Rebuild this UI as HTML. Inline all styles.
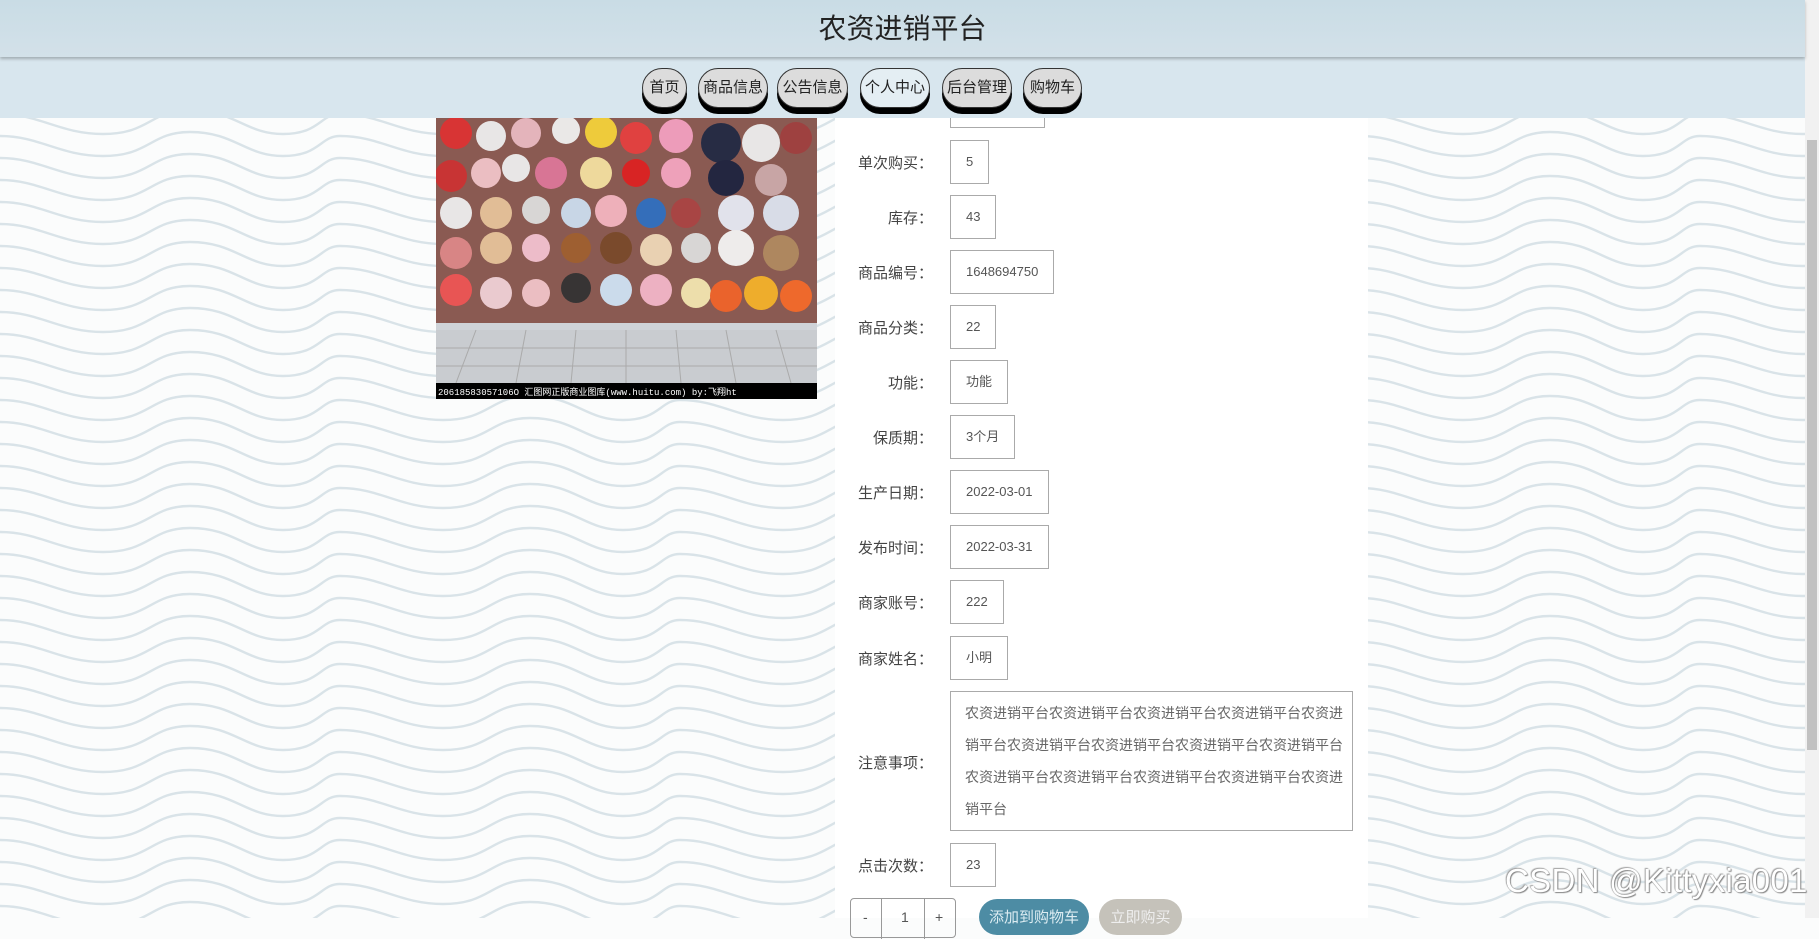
<!DOCTYPE html>
<html><head><meta charset="utf-8">
<style>
*{margin:0;padding:0;box-sizing:border-box}
html,body{width:1819px;height:918px;overflow:hidden;font-family:"Liberation Sans","Noto Sans CJK SC",sans-serif;background:#fbfcfc}
#bg{position:absolute;left:0;top:0;width:1805px;height:918px}
.hdr{position:absolute;left:0;top:0;width:1805px;height:57px;background:linear-gradient(#c9dce5,#d3e1e9);box-shadow:0 2px 3px rgba(0,0,0,.25);z-index:3;text-align:center;font-size:28px;line-height:57px;color:#222}
.nav{position:absolute;left:0;top:57px;width:1805px;height:61px;background:#d8e6ee;z-index:2}
.btn{position:absolute;top:11px;height:40px;border:1.5px solid #333;border-radius:20px;background:#dcdcdc;box-shadow:0 6px 0 #000;font-size:15px;line-height:37px;text-align:center;color:#222}
.panel{position:absolute;left:835px;top:118px;width:533px;height:800px;background:#fff}
.lab{position:absolute;width:200px;left:733px;text-align:right;font-size:15px;color:#444}
.box{position:absolute;left:950px;height:44px;border:1px solid #aaa;background:#fff;font-size:13px;color:#555;line-height:42px;padding:0 15px;white-space:nowrap}
.sb{position:absolute;left:1805px;top:0;width:14px;height:918px;background:#f1f1f1}
.thumb{position:absolute;left:1807px;top:140px;width:10px;height:610px;background:#c1c1c1}
.wm{position:absolute;left:1505px;top:862px;font-size:33px;color:#fff;text-shadow:0 0 1px #777,1px 1px 1px #888,-1px -1px 1px #aaa;letter-spacing:0.3px}
</style></head><body>
<svg id="bg" width="1805" height="918">
<defs><pattern id="w" width="340" height="22" patternUnits="userSpaceOnUse">
<g fill="none" stroke="#d9e3e8" stroke-width="2.4">
<path id="p" d="M0 4 C40 4 60 24 103 24 C150 24 150 0 190 0 C235 0 245 24 283 24 C320 24 320 4 340 4"/>
<use href="#p" y="-22"/><use href="#p" y="22"/>
</g></pattern></defs>
<rect width="1805" height="918" fill="url(#w)"/>
</svg>
<div class="hdr">农资进销平台</div>
<div class="nav">
<div class="btn" style="left:642px;width:45px">首页</div>
<div class="btn" style="left:698px;width:70px">商品信息</div>
<div class="btn" style="left:777px;width:71px">公告信息</div>
<div class="btn" style="left:860px;width:70px;background:#e4eef3">个人中心</div>
<div class="btn" style="left:942px;width:70px">后台管理</div>
<div class="btn" style="left:1023px;width:59px">购物车</div>
</div>
<div class="panel"></div>
<svg style="position:absolute;left:436px;top:118px" width="381" height="281">
<rect width="381" height="212" fill="#8a5a52"/>
<g opacity=".95">
<circle cx="20" cy="15" r="16" fill="#d33"/><circle cx="55" cy="18" r="15" fill="#eee"/><circle cx="90" cy="15" r="15" fill="#e9b9c1"/><circle cx="130" cy="12" r="14" fill="#f0f0f0"/><circle cx="165" cy="14" r="16" fill="#f4d23a"/><circle cx="200" cy="20" r="16" fill="#e54040"/><circle cx="240" cy="18" r="17" fill="#f3a0c0"/><circle cx="285" cy="25" r="20" fill="#222a44"/><circle cx="325" cy="25" r="19" fill="#eee"/><circle cx="360" cy="20" r="16" fill="#a04040"/>
<circle cx="15" cy="58" r="16" fill="#c33"/><circle cx="50" cy="55" r="15" fill="#f1c4c8"/><circle cx="80" cy="50" r="14" fill="#eee"/><circle cx="115" cy="55" r="16" fill="#d79"/><circle cx="160" cy="55" r="16" fill="#f4e0a0"/><circle cx="200" cy="55" r="14" fill="#d22"/><circle cx="240" cy="55" r="15" fill="#f4a5c0"/><circle cx="290" cy="60" r="18" fill="#1e2440"/><circle cx="335" cy="62" r="16" fill="#caa"/>
<circle cx="20" cy="95" r="16" fill="#eee"/><circle cx="60" cy="95" r="16" fill="#e6c39a"/><circle cx="100" cy="92" r="14" fill="#ddd"/><circle cx="140" cy="95" r="15" fill="#cde"/><circle cx="175" cy="93" r="16" fill="#f4b5c0"/><circle cx="215" cy="95" r="15" fill="#3070c0"/><circle cx="250" cy="95" r="15" fill="#a44"/><circle cx="300" cy="95" r="18" fill="#e6eaf4"/><circle cx="345" cy="95" r="18" fill="#dde4f0"/>
<circle cx="20" cy="135" r="16" fill="#d88"/><circle cx="60" cy="130" r="16" fill="#e6c39a"/><circle cx="100" cy="130" r="14" fill="#f3c2d0"/><circle cx="140" cy="130" r="15" fill="#a06030"/><circle cx="180" cy="130" r="16" fill="#7a4a2a"/><circle cx="220" cy="132" r="16" fill="#efd8b8"/><circle cx="260" cy="130" r="15" fill="#ddd"/><circle cx="300" cy="130" r="18" fill="#f4f4f4"/><circle cx="345" cy="135" r="18" fill="#b08a60"/>
<circle cx="20" cy="172" r="16" fill="#e55"/><circle cx="60" cy="175" r="16" fill="#f0d0d6"/><circle cx="100" cy="175" r="14" fill="#f1c4c8"/><circle cx="140" cy="170" r="15" fill="#333"/><circle cx="180" cy="172" r="16" fill="#cfe2f4"/><circle cx="220" cy="172" r="16" fill="#f3b6c8"/><circle cx="260" cy="175" r="15" fill="#f3e6b0"/><circle cx="290" cy="178" r="16" fill="#f0642a"/><circle cx="325" cy="175" r="17" fill="#f4b22a"/><circle cx="360" cy="178" r="16" fill="#f46a2a"/>
</g>
<rect y="205" width="381" height="7" fill="#cfd3d8"/>
<rect y="212" width="381" height="53" fill="#c9ccd0"/>
<g stroke="#aaa" stroke-width="1"><line x1="0" y1="230" x2="381" y2="230"/><line x1="0" y1="248" x2="381" y2="248"/><line x1="40" y1="212" x2="20" y2="265"/><line x1="90" y1="212" x2="80" y2="265"/><line x1="140" y1="212" x2="135" y2="265"/><line x1="190" y1="212" x2="190" y2="265"/><line x1="240" y1="212" x2="245" y2="265"/><line x1="290" y1="212" x2="300" y2="265"/><line x1="340" y1="212" x2="355" y2="265"/></g>
<rect y="265" width="381" height="16" fill="#000"/>
<text x="2" y="277" font-size="9" fill="#fff" font-family="Liberation Mono,'Noto Sans CJK SC',monospace">20618583057106O  汇图网正版商业图库(www.huitu.com) by:飞翔ht</text>
</svg>
<div class="box" style="top:110px;width:95px;height:18px"></div>
<div class="lab" style="top:152px">单次购买：</div><div class="box" style="top:140px">5</div>
<div class="lab" style="top:207px">库存：</div><div class="box" style="top:195px">43</div>
<div class="lab" style="top:262px">商品编号：</div><div class="box" style="top:250px">1648694750</div>
<div class="lab" style="top:317px">商品分类：</div><div class="box" style="top:305px">22</div>
<div class="lab" style="top:372px">功能：</div><div class="box" style="top:360px">功能</div>
<div class="lab" style="top:427px">保质期：</div><div class="box" style="top:415px">3个月</div>
<div class="lab" style="top:482px">生产日期：</div><div class="box" style="top:470px">2022-03-01</div>
<div class="lab" style="top:537px">发布时间：</div><div class="box" style="top:525px">2022-03-31</div>
<div class="lab" style="top:592px">商家账号：</div><div class="box" style="top:580px">222</div>
<div class="lab" style="top:648px">商家姓名：</div><div class="box" style="top:636px">小明</div>
<div class="lab" style="top:752px">注意事项：</div>
<div class="box" style="top:691px;width:403px;height:140px;white-space:normal;word-break:break-all;font-size:14px;line-height:32px;padding:5px 8px 0 14px;color:#666">农资进销平台农资进销平台农资进销平台农资进销平台农资进销平台农资进销平台农资进销平台农资进销平台农资进销平台农资进销平台农资进销平台农资进销平台农资进销平台农资进销平台</div>
<div class="lab" style="top:855px">点击次数：</div><div class="box" style="top:843px">23</div>
<div style="position:absolute;left:850px;top:898px;width:106px;height:40px;border:1px solid #999;border-radius:4px;font-size:14px;color:#555">
<span style="position:absolute;left:12px;top:10px">-</span><div style="position:absolute;left:30px;top:0;width:1px;height:40px;background:#999"></div><span style="position:absolute;left:50px;top:10px">1</span><div style="position:absolute;left:73px;top:0;width:1px;height:40px;background:#999"></div><span style="position:absolute;left:84px;top:10px">+</span></div>
<div style="position:absolute;left:979px;top:899px;width:110px;height:36px;border-radius:18px;background:#4d8ca4;color:#dcecf2;font-size:15px;text-align:center;line-height:38px">添加到购物车</div>
<div style="position:absolute;left:1099px;top:899px;width:83px;height:36px;border-radius:18px;background:#c5c2ba;color:#eee;font-size:15px;text-align:center;line-height:38px">立即购买</div>
<div class="sb"></div><div class="thumb"></div>
<div class="wm">CSDN @Kittyxia001</div>
</body></html>
